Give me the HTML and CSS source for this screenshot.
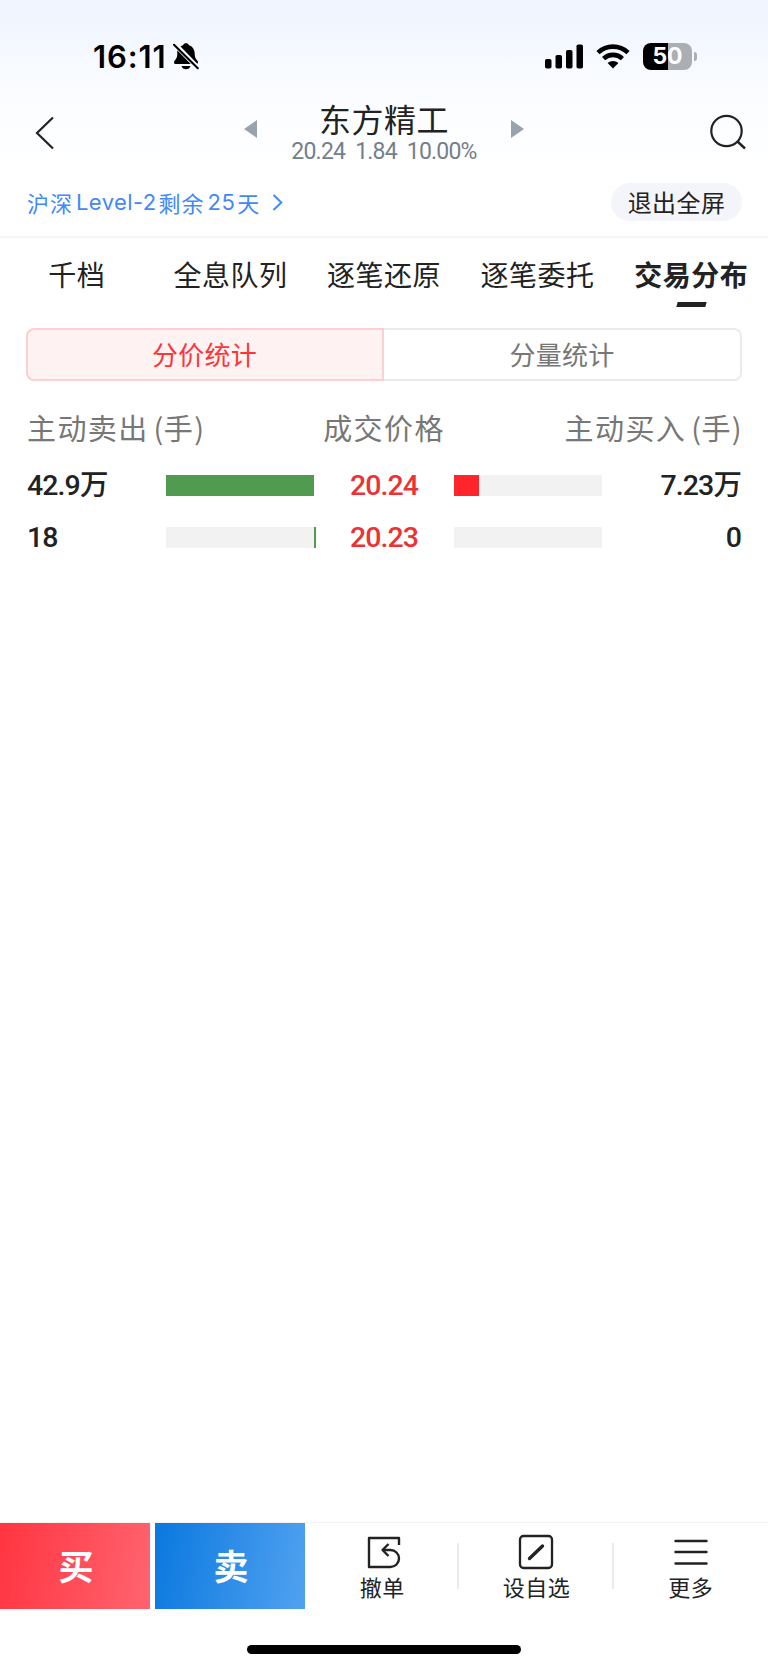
FILE: index.html
```
<!DOCTYPE html>
<html lang="zh-CN">
<head>
    <meta charset="UTF-8">
    <title>东方精工</title>
    <link rel="stylesheet" href="styles.css">
</head>
<body>
<div class="page">
    <!-- 状态栏 -->
    <div class="status">
        <div class="status-left">
            <span class="time">16:11</span>
            <svg class="bell" width="26" height="27" viewBox="0 0 26 27">
                <path d="M4.200 8.200C5.500 5 7.500 3 10 2.300C10.600.8 11.600.3 13 .3s2.400.5 3 2C20 3.500 21.500 7 21.700 10.500c.1 4.500 1.500 5.800 2.900 7.500.8 1 .4 3-1.100 3H2.500C1 21 .6 19 1.400 18c1.400-1.800 2.800-3 2.900-7zM8.500 23h9c-.5 2-2.200 3.300-4.500 3.300S9 25 8.500 23z" fill="#000"/>
                <path d="M1.800 1.200L24.600 24.600" stroke="#f7faff" stroke-width="5"/>
                <path d="M1 1.800L24.800 25.200" stroke="#000" stroke-width="2.100" stroke-linecap="round"/>
            </svg>
        </div>
        <div class="status-right">
            <svg width="38" height="25" viewBox="0 0 38 25">
                <rect x="0" y="15" width="6.500" height="9.500" rx="1.800"/>
                <rect x="10.500" y="11" width="6.500" height="13.500" rx="1.800"/>
                <rect x="21" y="6" width="6.500" height="18.500" rx="1.800"/>
                <rect x="31.500" y="0.500" width="6.500" height="24" rx="1.800"/>
            </svg>
            <svg class="wifi" width="34" height="25" viewBox="0 0 34 25">
                <path d="M2 8.600C10.500.6 23.500.6 32 8.600M7.600 14.600c5.300-5 13.500-5 18.800 0" fill="none" stroke="#000" stroke-width="4.600"/>
                <path d="M17 24.500l-5.400-5.500c3-2.700 7.800-2.700 10.800 0z"/>
            </svg>
            <div class="battery"><span>50</span></div>
            <div class="battery-cap"></div>
        </div>
    </div>

    <!-- 股票标题 -->
    <div class="nav">
        <svg class="back" width="20" height="34" viewBox="0 0 20 34">
            <path d="M18 1.500L2 17l16 15.500" fill="none" stroke="#222" stroke-width="2.200"/>
        </svg>
        <div class="stock">
            <svg width="13" height="18" viewBox="0 0 13 18"><path d="M13 0v18L0 9z" fill="#98a3ad"/></svg>
            <div class="stock-info">
                <div class="stock-name">东方精工</div>
                <div class="stock-price"><span>20.24</span><span>1.84</span><span>10.00%</span></div>
            </div>
            <svg width="13" height="18" viewBox="0 0 13 18"><path d="M0 0v18l13-9z" fill="#98a3ad"/></svg>
        </div>
        <svg class="search" width="36" height="36" viewBox="0 0 36 36">
            <circle cx="16.500" cy="17" r="15.200" fill="none" stroke="#222" stroke-width="2.200"/>
            <path d="M27 27l8 7.500" stroke="#222" stroke-width="2.400"/>
        </svg>
    </div>

    <div class="level">
        <div class="level-tip">
            <span>沪深</span><span class="en">Level-2</span><span>剩余</span><span class="en">25</span><span>天</span>
            <svg width="11" height="17" viewBox="0 0 11 17"><path d="M1.500 1L9.300 8.500 1.500 16" fill="none" stroke="#4189f7" stroke-width="2"/></svg>
        </div>
        <a class="exit">退出全屏</a>
    </div>

    <!-- 选项卡 -->
    <div class="tabs">
        <a class="tab">千档</a>
        <a class="tab">全息队列</a>
        <a class="tab">逐笔还原</a>
        <a class="tab">逐笔委托</a>
        <a class="tab active">交易分布</a>
    </div>

    <div class="segment">
        <a class="segment-item on">分价统计</a>
        <a class="segment-item">分量统计</a>
    </div>

    <!-- 成交分布 -->
    <div class="list">
        <div class="list-head">
            <span>主动卖出<i>(</i>手<i class="end">)</i></span>
            <span class="center">成交价格</span>
            <span class="right">主动买入<i>(</i>手<i class="end">)</i></span>
        </div>
        <div class="list-row">
            <span>42.9万</span>
            <div class="bar sell"><div class="fill" style="width: 100%"></div></div>
            <span class="price">20.24</span>
            <div class="bar buy"><div class="fill" style="width: 16.9%"></div></div>
            <span class="right">7.23万</span>
        </div>
        <div class="list-row">
            <span>18</span>
            <div class="bar sell thin"><div class="fill"></div></div>
            <span class="price">20.23</span>
            <div class="bar buy"></div>
            <span class="right">0</span>
        </div>
    </div>

    <!-- 底部工具栏 -->
    <div class="footer">
        <a class="trade trade-buy">买</a>
        <a class="trade trade-sell">卖</a>
        <a class="tool">
            <svg class="cancel" width="36" height="36" viewBox="0 0 36 36">
                <g fill="none" stroke="#222" stroke-width="2.400" stroke-linejoin="round">
                    <path d="M33 11V4H3v29h21.500a8.500 8.500 0 0 0 0-17H17"/>
                    <path d="M22.500 10L16.500 16l6 6"/>
                </g>
            </svg>
            <span>撤单</span>
        </a>
        <a class="tool">
            <svg width="36" height="36" viewBox="0 0 36 36">
                <rect x="2" y="2" width="32" height="32" rx="3.500" fill="none" stroke="#222" stroke-width="2.300"/>
                <path d="M11.500 24.500L24.500 12" stroke="#222" stroke-width="3.400" stroke-linecap="round"/>
            </svg>
            <span>设自选</span>
        </a>
        <a class="tool">
            <svg width="36" height="36" viewBox="0 0 36 36">
                <path d="M2.500 7h31M2.500 18h31M2.500 29.500h31" stroke="#222" stroke-width="2.400" stroke-linecap="round"/>
            </svg>
            <span>更多</span>
        </a>
    </div>
    <div class="home"></div>
</div>
</body>
</html>
```
FILE: styles.css
```
* {
    box-sizing: border-box;
}
body {
    margin: 0;
    background: #ffffff;
    color: #222222;
    font-family: "Noto Sans CJK SC", sans-serif;
}
svg {
    display: block;
    flex: none;
}
.page {
    display: flex;
    flex-direction: column;
    width: 768px;
    height: 1669px;
    background: linear-gradient(#f0f5ff 0, #f2f6ff 30px, #fafcff 85px, #ffffff 170px);
}
/* 状态栏 */
.status {
    display: flex;
    justify-content: space-between;
    height: 96px;
    padding: 43px 71px 0 93px;
}
.status-left {
    display: flex;
}
.time {
    width: 80px;
    font-family: Inter, sans-serif;
    font-size: 31px;
    font-weight: 600;
    letter-spacing: 0.9px;
    line-height: 28px;
    color: #000000;
}
.status-right {
    display: flex;
    height: 27px;
    align-items: center;
}
.wifi {
    margin: 0 13px;
}
.battery {
    width: 49px;
    height: 27px;
    border-radius: 8px;
    background: linear-gradient(90deg, #000000 25px, #abafb4 25px);
    color: #ffffff;
    font-family: Inter, sans-serif;
    font-size: 23px;
    font-weight: 700;
    line-height: 27px;
    text-align: center;
}
.battery-cap {
    width: 3px;
    height: 9px;
    margin-left: 2px;
    border-radius: 0 4px 4px 0;
    background: #abafb4;
}
/* 标题 */
.nav {
    display: flex;
    justify-content: space-between;
    height: 72px;
    padding: 0 22px 0 35px;
}
.back {
    margin-top: 20px;
}
.search {
    margin-top: 18px;
}
.stock {
    display: flex;
    width: 280px;
    margin-left: 3px;
    justify-content: space-between;
}
.stock > svg {
    margin-top: 24px;
}
.stock-info {
    text-align: center;
    white-space: nowrap;
}
.stock-name {
    font-size: 32px;
    letter-spacing: 0.5px;
    line-height: 44px;
}
.stock-price {
    display: flex;
    gap: 10px;
    justify-content: center;
    font-family: Roboto, sans-serif;
    font-size: 23px;
    line-height: 23px;
    letter-spacing: -0.8px;
    color: #73808c;
}
.level {
    display: flex;
    justify-content: space-between;
    align-items: center;
    height: 70px;
    padding: 0 26px 0 27px;
    border-bottom: 2px solid #f5f5f5;
}
.level-tip {
    display: flex;
    align-items: center;
    font-size: 22px;
    letter-spacing: 1px;
    line-height: 32px;
    padding-bottom: 1px;
    color: #4189f7;
}
.level-tip .en {
    margin: 0 2px 0 3px;
    font-family: Inter, sans-serif;
    letter-spacing: 0.4px;
}
.level-tip svg {
    margin: 1px 0 0 12px;
}
.exit {
    width: 131px;
    height: 38px;
    border-radius: 19px;
    background: #f4f5fa;
    font-size: 24px;
    letter-spacing: 0.4px;
    line-height: 37px;
    text-align: center;
}
/* 选项卡 */
.tabs {
    display: flex;
    height: 90px;
}
.tab {
    display: flex;
    flex-direction: column;
    align-items: center;
    flex: 1;
    font-size: 28px;
    letter-spacing: 0.5px;
    line-height: 40px;
    padding-top: 16px;
}
.active {
    font-weight: 700;
}
.active::after {
    content: "";
    width: 29px;
    height: 5px;
    margin-top: 8px;
    background: #222222;
    transform: skewX(-15deg);
}
.segment {
    display: flex;
    height: 53px;
    margin: 0 26px;
}
.segment-item {
    width: 50%;
    border: 2px solid #ebebeb;
    border-left: 0;
    border-radius: 0 8px 8px 0;
    font-size: 26px;
    letter-spacing: 0.3px;
    line-height: 48px;
    text-align: center;
    color: #777777;
}
.on {
    border: 2px solid #fbd0d2;
    border-radius: 8px 0 0 8px;
    background: #fff2f3;
    padding-right: 1px;
    color: #fb3638;
}
/* 列表 */
.list {
    flex: 1;
    padding: 0 27px;
}
.list-head {
    display: grid;
    grid-template-columns: 1fr 1fr 1fr;
    height: 78px;
    padding-top: 24px;
    font-size: 29px;
    letter-spacing: 1.4px;
    line-height: 44px;
    color: #777777;
}
.list-head i {
    font-style: normal;
    margin-left: 5px;
    margin-right: -1px;
}
.list-head .end {
    margin-left: 0;
    margin-right: -2px;
}
.center {
    text-align: center;
}
.right {
    text-align: right;
}
.list-row {
    display: grid;
    grid-template-columns: 139px 148px 140px 148px 139px;
    align-items: center;
    height: 52px;
    font-family: Roboto, "Noto Sans CJK SC", sans-serif;
    font-size: 28.5px;
    font-weight: 500;
    letter-spacing: -0.9px;
    line-height: 40px;
}
.list-row span {
    padding-top: 2px;
}
.price {
    text-align: center;
    color: #ed3233;
}
.bar {
    display: flex;
    height: 21px;
    background: #f2f2f2;
}
.sell {
    justify-content: flex-end;
}
.sell .fill {
    background: #519b50;
}
.buy .fill {
    background: #ff252b;
}
.thin .fill {
    width: 2px;
    margin-right: -2px;
}
/* 底部 */
.footer {
    display: flex;
    height: 87px;
    border-top: 1px solid #f2f2f2;
}
.trade {
    width: 150px;
    margin-right: 5px;
    color: #ffffff;
    font-size: 35px;
    font-weight: 700;
    line-height: 83px;
    text-align: center;
    padding-left: 2px;
}
.trade-buy {
    background: linear-gradient(100deg, #ff3541, #ff6470);
}
.trade-sell {
    margin-right: 0;
    background: linear-gradient(100deg, #0a78df, #51a2f0);
}
.tool {
    display: flex;
    flex-direction: column;
    align-items: center;
    flex: 1;
    padding-top: 11px;
    font-size: 22px;
    letter-spacing: 0.5px;
    line-height: 33px;
    background: linear-gradient(#ebebeb, #ebebeb) no-repeat right 20px / 2px 46px;
}
.tool:last-child {
    background: none;
}
.cancel {
    margin-left: 3px;
}
.home {
    width: 274px;
    height: 9px;
    margin: 36px auto 15px;
    border-radius: 5px;
    background: #000000;
}
```
